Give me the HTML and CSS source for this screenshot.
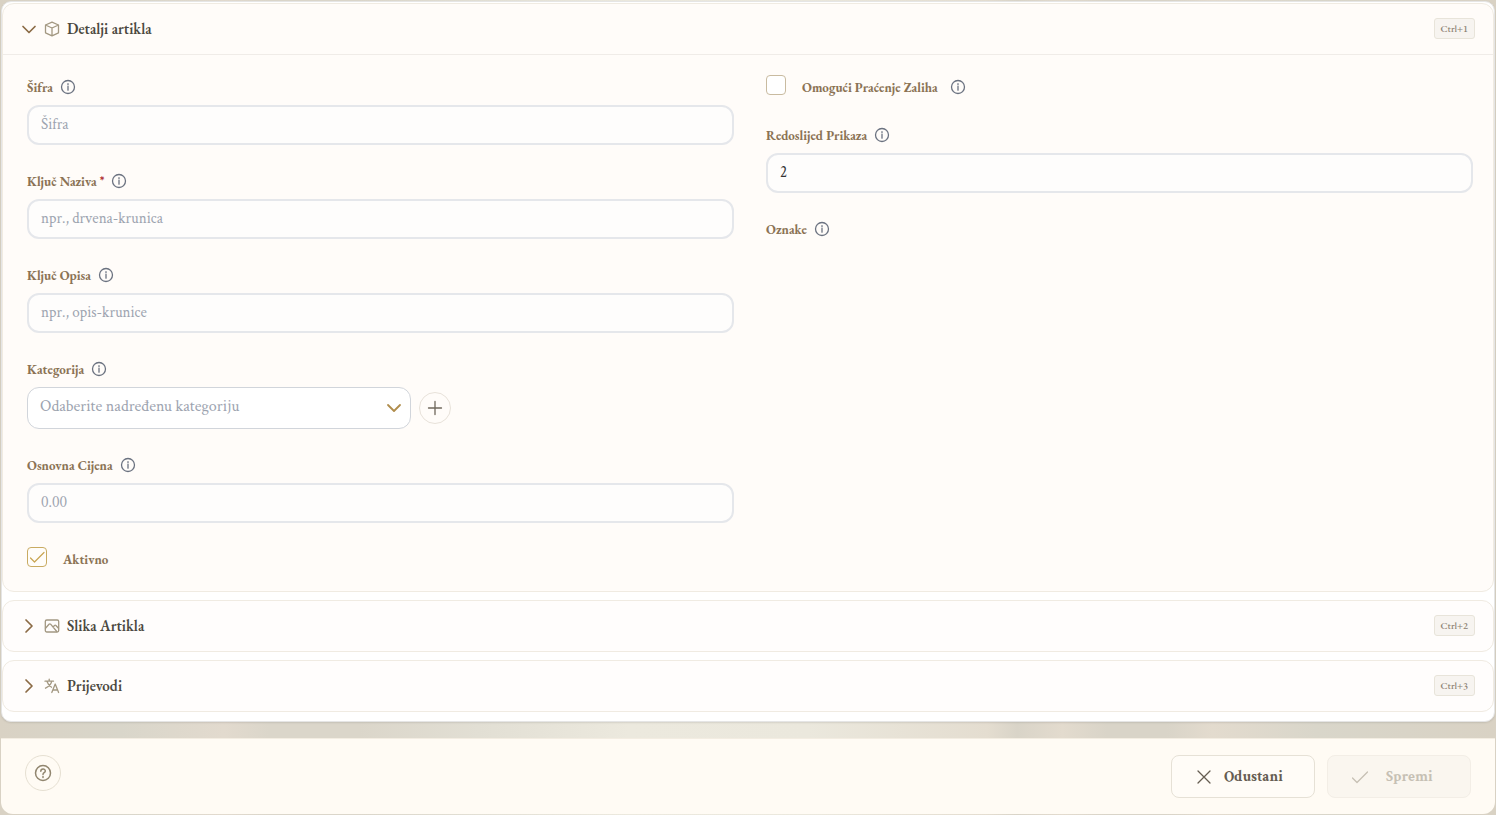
FILE: index.html
```html
<!DOCTYPE html>
<html lang="hr">
<head>
    <meta charset="UTF-8">
    <meta name="viewport" content="width=device-width, initial-scale=1.0">
    <title>Novi artikl</title>
    <link rel="stylesheet" href="styles.css">
</head>
<body>

<!-- Shared icons -->
<svg class="sprite" aria-hidden="true">
    <symbol id="info" viewBox="0 0 16 16"><circle cx="8" cy="8" r="6.5"/><path d="M8 7.2v4M8 4.7v.9"/></symbol>
    <symbol id="down" viewBox="0 0 16 16"><path d="M2 5.500 8 11.500l6-6"/></symbol>
    <symbol id="right" viewBox="0 0 16 16"><path d="M5 2l6 6-6 6"/></symbol>
</svg>

<form class="page">
    <main class="panel">
        <section class="card open">
            <button type="button" class="card-header" aria-expanded="true">
                <svg class="icon chevron"><use href="#down"/></svg>
                <svg class="icon" viewBox="0 0 16 16"><path d="M8 1.200 14.500 4v7.800L8 14.800 1.500 11.800V4zM1.500 4 8 7l6.500-3M8 7v7.800"/></svg>
                <span class="card-title">Detalji artikla</span>
                <kbd>Ctrl+1</kbd>
            </button>
            <div class="card-body">
                <div class="column">
                    <div class="field">
                        <div class="label-row">
                            <label for="sifra">Šifra</label>
                            <svg class="icon info"><use href="#info"/></svg>
                        </div>
                        <input class="text-input" type="text" id="sifra" placeholder="Šifra">
                    </div>
                    <div class="field">
                        <div class="label-row">
                            <label for="naziv">Ključ Naziva <span class="required">*</span></label>
                            <svg class="icon info"><use href="#info"/></svg>
                        </div>
                        <input class="text-input" type="text" id="naziv" placeholder="npr., drvena-krunica">
                    </div>
                    <div class="field">
                        <div class="label-row">
                            <label for="opis">Ključ Opisa</label>
                            <svg class="icon info"><use href="#info"/></svg>
                        </div>
                        <input class="text-input" type="text" id="opis" placeholder="npr., opis-krunice">
                    </div>
                    <div class="field">
                        <div class="label-row">
                            <label for="kategorija">Kategorija</label>
                            <svg class="icon info"><use href="#info"/></svg>
                        </div>
                        <div class="select-row">
                            <select id="kategorija">
                                <option>Odaberite nadređenu kategoriju</option>
                            </select>
                            <button type="button" class="add-button" aria-label="Dodaj kategoriju">
                                <svg class="icon" viewBox="0 0 16 16"><path d="M8 1.500v13M1.500 8h13"/></svg>
                            </button>
                        </div>
                    </div>
                    <div class="field">
                        <div class="label-row">
                            <label for="cijena">Osnovna Cijena</label>
                            <svg class="icon info"><use href="#info"/></svg>
                        </div>
                        <input class="text-input" type="text" id="cijena" placeholder="0.00">
                    </div>
                    <div class="check-row">
                        <input type="checkbox" id="aktivno" checked>
                        <label for="aktivno">Aktivno</label>
                    </div>
                </div>
                <div class="column">
                    <div class="check-row">
                        <input type="checkbox" id="zalihe">
                        <label for="zalihe">Omogući Praćenje Zaliha</label>
                        <svg class="icon info"><use href="#info"/></svg>
                    </div>
                    <div class="field">
                        <div class="label-row">
                            <label for="redoslijed">Redoslijed Prikaza</label>
                            <svg class="icon info"><use href="#info"/></svg>
                        </div>
                        <input class="text-input" type="text" id="redoslijed" value="2">
                    </div>
                    <div class="label-row">
                        <span class="label">Oznake</span>
                        <svg class="icon info"><use href="#info"/></svg>
                    </div>
                </div>
            </div>
        </section>

        <section class="card">
            <button type="button" class="card-header" aria-expanded="false">
                <svg class="icon chevron"><use href="#right"/></svg>
                <svg class="icon" viewBox="0 0 16 16"><rect x="1.300" y="2" width="13.400" height="12" rx="1.500"/><path d="M1.500 10.200 5 6.200q.8-.8 1.600 0L12.800 13.500M9 9l1.500-1.500q.7-.6 1.400 0l2.600 2.800"/></svg>
                <span class="card-title">Slika Artikla</span>
                <kbd>Ctrl+2</kbd>
            </button>
        </section>

        <section class="card">
            <button type="button" class="card-header" aria-expanded="false">
                <svg class="icon chevron"><use href="#right"/></svg>
                <svg class="icon" viewBox="0 0 16 16"><path d="M1 3.200h8.500M5.200 1.200v2M7.800 3.200C7 6.500 4.500 8.800 1.500 10.200M3 3.500C3.800 6 5.500 8 7.500 9.200M7.800 14.500l3.400-8.500 3.400 8.500M9 12h4.500"/></svg>
                <span class="card-title">Prijevodi</span>
                <kbd>Ctrl+3</kbd>
            </button>
        </section>
    </main>

    <footer>
        <button type="button" class="help-button" aria-label="Pomoć">
            <svg viewBox="0 0 18 18"><circle cx="9" cy="9" r="7.500"/><path d="M6.800 7.200C6.800 4.200 11.300 4.300 11.300 7c0 1.700-2.300 1.600-2.300 3.400M9 12.400v1"/></svg>
        </button>
        <div class="actions">
            <button type="button" class="action">
                <svg class="icon" viewBox="0 0 16 16"><path d="M2 2l12 12M14 2 2 14"/></svg>
                <span>Odustani</span>
            </button>
            <button type="submit" class="action save" disabled>
                <svg class="icon" viewBox="0 0 16 16"><path d="M.5 9 5 13.500 15.500 3"/></svg>
                <span>Spremi</span>
            </button>
        </div>
    </footer>
</form>

</body>
</html>
```

FILE: styles.css
```css
* {
    box-sizing: border-box;
}
body {
    margin: 0;
    font-family: "EB Garamond", "Liberation Serif", serif;
    color: #4b4740;
    background: linear-gradient(90deg, #d9d2c4 0%, #d9d6ca 8%, #e2dace 15%, #dbd6ca 18%, #dbd6ca 24%, #e2dfd4 32%, #ece9de 42%, #ebe8dd 54%, #e4ddd0 66%, #d9d4c8 68%, #e3dbce 71%, #d9d4c8 74%, #d9d4c8 78%, #e3dbce 81%, #d9d6ca 88%, #d9d2c4 100%);
}
button {
    font-family: inherit;
}
input, select, .action {
    font-family: "Gentium Book Basic", "Gentium Basic", "Crimson Text", "Liberation Serif", serif;
}
.sprite {
    display: none;
}
.page {
    min-height: 100vh;
    padding: 1px;
    display: flex;
    flex-direction: column;
    justify-content: space-between;
    gap: 16px;
}
.panel {
    display: flex;
    flex-direction: column;
    gap: 8px;
    padding: 1px 0 9px;
    background: #fff;
    border: 1px solid #e5e5e5;
    border-radius: 10px;
    box-shadow: 0 1px 2px rgba(0, 0, 0, 0.1);
}
.card {
    background: #fffdfc;
    border: 1px solid #f0ebe2;
    border-radius: 12px;
}
.open {
    background: #fffcf9;
}
.card-header {
    width: 100%;
    height: 50px;
    padding: 0 18px 1px;
    display: flex;
    align-items: center;
    gap: 7px;
    background: none;
    border: none;
    color: #4b4840;
    text-align: left;
    cursor: pointer;
}
.open .card-header {
    height: 51px;
    border-bottom: 1px solid #f0ece8;
}
.card-title {
    flex: 1;
    font-size: 15px;
    font-weight: 600;
}
.icon {
    width: 16px;
    height: 16px;
    flex: none;
    color: #a39882;
}
svg {
    fill: none;
    stroke: currentColor;
    stroke-width: 1.3;
    stroke-linecap: round;
    stroke-linejoin: round;
}
.chevron {
    color: #8b6b45;
    stroke-width: 1.7;
}
kbd {
    height: 21px;
    padding: 0 6px;
    font: 500 10px/19px "EB Garamond", "Liberation Serif", serif;
    color: #8c8172;
    background: #f7f4f0;
    border: 1px solid #e8e4da;
    border-radius: 3px;
}
.card-body {
    display: grid;
    grid-template-columns: 1fr 1fr;
    gap: 32px;
    padding: 20px 20px 20px 24px;
}
.column {
    display: flex;
    flex-direction: column;
    gap: 24px;
}
.field {
    display: flex;
    flex-direction: column;
    gap: 6px;
}
.label-row {
    height: 24px;
    display: flex;
    align-items: center;
    gap: 7px;
}
label, .label {
    font-size: 13px;
    font-weight: 700;
    color: #8b7355;
}
.required {
    color: #b23a3a;
}
.info {
    color: #6b7280;
}
.text-input {
    width: 100%;
    height: 40px;
    padding: 0 12px 2px;
    font-size: 15px;
    color: #333;
    background: #fefdfc;
    border: 2px solid #e5e7eb;
    border-radius: 12px;
}
.text-input::placeholder {
    color: #9ca3af;
}
.select-row {
    display: flex;
    align-items: center;
    gap: 8px;
}
select {
    width: 100%;
    max-width: 384px;
    height: 42px;
    padding: 0 32px 3px 12px;
    appearance: none;
    font-size: 16px;
    color: #9ca3af;
    background: #fff url("data:image/svg+xml,%3Csvg xmlns='http://www.w3.org/2000/svg' viewBox='0 0 16 16' fill='none' stroke='%23b08d4c' stroke-width='1.8' stroke-linecap='round' stroke-linejoin='round'%3E%3Cpath d='M2 5l6 6 6-6'/%3E%3C/svg%3E") no-repeat right 8px center / 16px;
    border: 1px solid #d1d5db;
    border-radius: 12px;
}
.add-button, .help-button {
    flex: none;
    display: flex;
    align-items: center;
    justify-content: center;
    padding: 0;
    background: none;
    border: 1px solid #e8e2da;
    border-radius: 50%;
    cursor: pointer;
}
.add-button {
    width: 32px;
    height: 32px;
}
.add-button .icon {
    color: #6f675b;
}
.check-row {
    height: 24px;
    display: flex;
    align-items: center;
    gap: 12px;
}
.check-row label {
    margin-left: 4px;
}
input[type="checkbox"] {
    width: 20px;
    height: 20px;
    margin: 0;
    align-self: flex-start;
    appearance: none;
    background: #fff;
    border: 1px solid #c9bba0;
    border-radius: 4px;
}
input[type="checkbox"]:checked {
    background: #fffdfa url("data:image/svg+xml,%3Csvg xmlns='http://www.w3.org/2000/svg' viewBox='0 0 18 18' fill='none' stroke='%23c9a552' stroke-width='1.2' stroke-linecap='round' stroke-linejoin='round'%3E%3Cpath d='M2.500 10l4 4 9.500-9.500'/%3E%3C/svg%3E") no-repeat center / 18px;
    border-color: #c9ab62;
}
footer {
    display: flex;
    justify-content: space-between;
    align-items: flex-start;
    padding: 16px 24px;
    background: #fffbf4;
    border-top: 1px solid #f3ede2;
    border-radius: 0 0 12px 12px;
}
.help-button {
    width: 36px;
    height: 36px;
    border-color: #e6e0d2;
    color: #91866f;
}
.help-button svg {
    width: 18px;
    height: 18px;
    stroke-width: 1.5;
}
.actions {
    display: flex;
    gap: 12px;
}
.action {
    width: 144px;
    height: 43px;
    padding: 0 24px;
    display: flex;
    align-items: center;
    gap: 12px;
    font-size: 15px;
    font-weight: 700;
    color: #655d51;
    background: #fffcf7;
    border: 1px solid #e6e1d6;
    border-radius: 8px;
    cursor: pointer;
}
.action .icon {
    color: inherit;
}
.save {
    gap: 18px;
    color: #c6c0b4;
    background: #faf6ef;
    border-color: #f3eee6;
}
```
